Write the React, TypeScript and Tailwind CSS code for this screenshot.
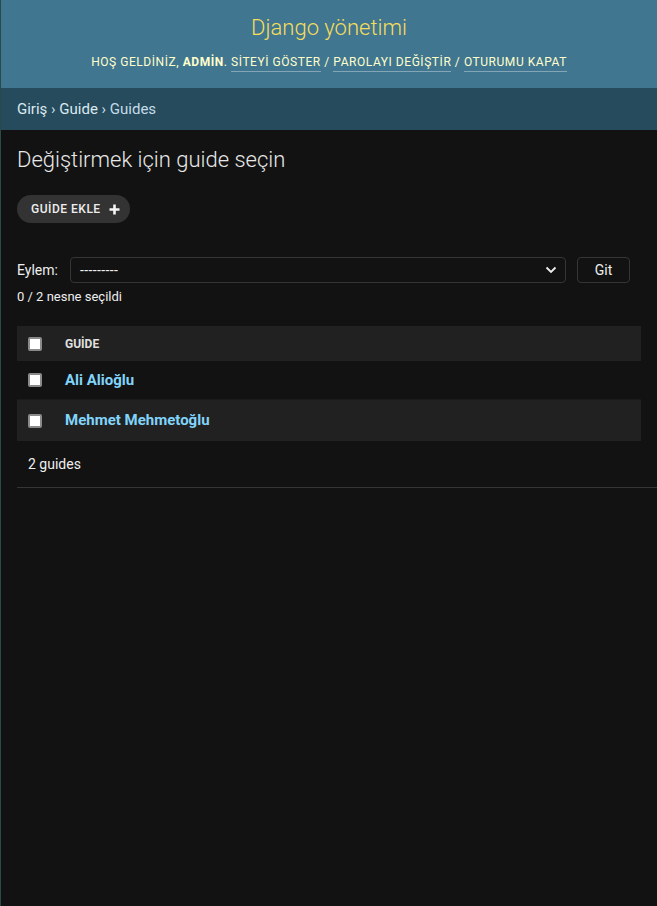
import React from "react";

function Box() {
  return <div className="w-[14px] h-[14px] bg-white border-2 border-[#8a8a8a] rounded-[2px]" />;
}

export default function App() {
  return (
    <div className="min-h-[906px] bg-[#121212] text-[#eeeeee] border-l border-[#2a4a4a]" style={{ fontFamily: "Roboto, 'Liberation Sans', sans-serif" }}>
      <header className="bg-[#417690] h-[88px] flex flex-col items-center pt-[13px]">
        <div className="text-[22px] font-light text-[#f5dd5d] leading-[30px]">Django yönetimi</div>
        <div className="mt-[11px] text-[12px] uppercase tracking-[0.55px] text-[#ffffcc] leading-[16px]">
          HOŞ GELDİNİZ, <strong className="font-bold">ADMİN</strong>.{" "}
          <span className="border-b border-[rgba(255,255,255,0.35)] pb-[2px]">SİTEYİ GÖSTER</span> /{" "}
          <span className="border-b border-[rgba(255,255,255,0.35)] pb-[2px]">PAROLAYI DEĞİŞTİR</span> /{" "}
          <span className="border-b border-[rgba(255,255,255,0.35)] pb-[2px]">OTURUMU KAPAT</span>
        </div>
      </header>
      <nav className="bg-[#264b5d] h-[42px] flex items-center px-4 text-[15px] text-[#c4dce8]">
        <span className="text-[#dbe9f0]">Giriş</span>&nbsp;›&nbsp;<span className="text-[#dbe9f0]">Guide</span>&nbsp;›&nbsp;Guides
      </nav>
      <main className="pl-4 pr-4">
        <h1 className="text-[22px] font-light mt-[17px] leading-[26px] text-[#e8e8e8]">Değiştirmek için guide seçin</h1>
        <div className="mt-[22px]">
          <div className="inline-flex items-center h-[28px] rounded-full bg-[#333333] pl-[14px] pr-[10px] text-[12px] font-medium tracking-[0.5px] text-[#eeeeee]">
            GUİDE EKLE
            <svg width="11" height="11" viewBox="0 0 11 11" className="ml-[8px]"><path d="M5.5 0.5v10M0.5 5.5h10" stroke="#f5f5f5" strokeWidth="2.6" /></svg>
          </div>
        </div>
        <div className="mt-[34px] flex items-center">
          <span className="text-[14px] mr-[12px]">Eylem:</span>
          <div className="flex-1 h-[26px] border border-[#353535] rounded-[4px] flex items-center justify-between pl-[9px] pr-2 text-[14px]">
            <span className="tracking-[0.4px]">---------</span>
            <svg width="12" height="8" viewBox="0 0 12 8"><path d="M1.5 1.5l4.5 4.5 4.5-4.5" stroke="#eeeeee" strokeWidth="1.8" fill="none" /></svg>
          </div>
          <div className="ml-[11px] w-[53px] h-[26px] border border-[#353535] rounded-[4px] flex items-center justify-center text-[14px]">Git</div>
          <div className="w-[11px]" />
        </div>
        <div className="text-[13px] mt-[6px] leading-[16px]">0 / 2 nesne seçildi</div>
        <div className="mt-[21px]">
          <div className="h-[35px] bg-[#212121] flex items-center">
            <div className="pl-[11px] w-[48px]"><Box /></div>
            <span className="text-[12px] font-bold text-[#e0e0e0] uppercase">GUİDE</span>
          </div>
          <div className="h-[39px] flex items-center border-b border-[#1a1a1a]">
            <div className="pl-[11px] w-[48px]"><Box /></div>
            <span className="text-[15px] font-bold text-[#81d4fa]">Ali Alioğlu</span>
          </div>
          <div className="h-[41px] bg-[#212121] flex items-center">
            <div className="pl-[11px] w-[48px]"><Box /></div>
            <span className="text-[15px] font-bold text-[#81d4fa]">Mehmet Mehmetoğlu</span>
          </div>
          <div className="h-[47px] flex items-center pl-[11px] text-[14px] border-b border-[#353535] -mr-4">2 guides</div>
        </div>
      </main>
    </div>
  );
}
